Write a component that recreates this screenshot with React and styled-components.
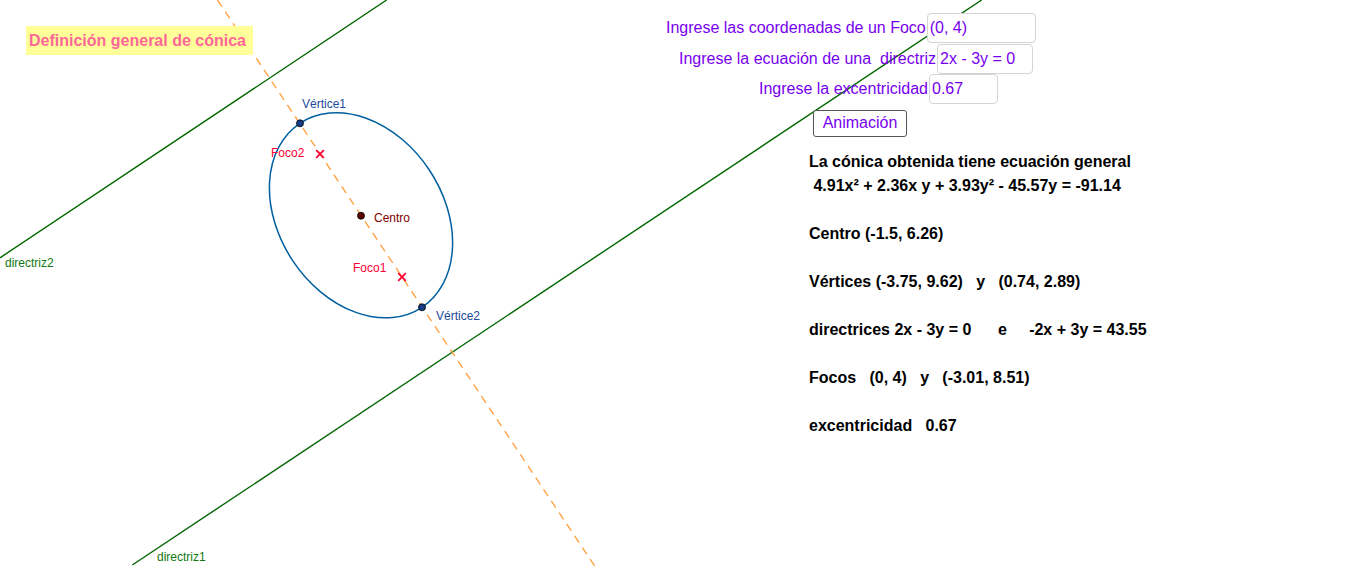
import React from 'react';
import styled, { createGlobalStyle } from 'styled-components';

const GlobalStyle = createGlobalStyle`
  html, body {
    margin: 0;
    padding: 0;
    background: #ffffff;
    overflow: hidden;
  }
  body {
    font-family: "Liberation Sans", Arial, sans-serif;
  }
`;

const cx = 361;
const cy = 215.3;
const angle = 56.45;

export default function App() {
  return (
    <>
      <GlobalStyle />
      <Applet>
        <Canvas width="1366" height="568" viewBox="0 0 1366 568">
          <line x1="0" y1="257.8" x2="386.7" y2="0" className="directriz" />
          <line x1="132.3" y1="565" x2="981.7" y2="0" className="directriz" />
          <line x1="217.5" y1="0" x2="596" y2="568" className="axis" />
          <ellipse
            cx={cx}
            cy={cy}
            rx="110.4"
            ry="82"
            transform={`rotate(${angle} ${cx} ${cy})`}
            className="conic"
          />
          <Cross x={320} y={154} />
          <Cross x={402} y={277} />
          <circle cx="300" cy="123.3" r="3.5" className="vertex" />
          <circle cx="422" cy="307.3" r="3.5" className="vertex" />
          <circle cx={cx} cy="215.7" r="3.5" className="center" />

          <text x="302" y="108" className="lbl-vertex">Vértice1</text>
          <text x="436" y="320" className="lbl-vertex">Vértice2</text>
          <text x="271" y="157" className="lbl-focus">Foco2</text>
          <text x="353" y="272" className="lbl-focus">Foco1</text>
          <text x="374" y="222" className="lbl-center">Centro</text>
          <text x="5" y="267" className="lbl-line">directriz2</text>
          <text x="157" y="561" className="lbl-line">directriz1</text>
        </Canvas>

        <Title>Definición general de cónica</Title>

        <InputPanel>
          <InputRow $indent={0}>
            <Label>Ingrese las coordenadas de un Foco</Label>
            <Field $width={109}>(0, 4)</Field>
          </InputRow>
          <InputRow $indent={13}>
            <Label>Ingrese la ecuación de una&nbsp; directriz</Label>
            <Field $width={96}>2x - 3y = 0</Field>
          </InputRow>
          <InputRow $indent={93}>
            <Label>Ingrese la excentricidad</Label>
            <Field $width={69}>0.67</Field>
          </InputRow>
          <ButtonRow $indent={147}>
            <Button>Animación</Button>
          </ButtonRow>
        </InputPanel>

        <Results>
          <ResultLine>La cónica obtenida tiene ecuación general</ResultLine>
          <ResultLine> 4.91x² + 2.36x y + 3.93y² - 45.57y = -91.14</ResultLine>
          <ResultLine $gap>Centro (-1.5, 6.26)</ResultLine>
          <ResultLine $gap>Vértices (-3.75, 9.62)   y   (0.74, 2.89)</ResultLine>
          <ResultLine $gap>directrices 2x - 3y = 0      e     -2x + 3y = 43.55</ResultLine>
          <ResultLine $gap>Focos   (0, 4)   y   (-3.01, 8.51)</ResultLine>
          <ResultLine $gap>excentricidad   0.67</ResultLine>
        </Results>
      </Applet>
    </>
  );
}

function Cross({ x, y }) {
  const s = 3.8;
  return (
    <g className="focus">
      <line x1={x - s} y1={y - s} x2={x + s} y2={y + s} />
      <line x1={x - s} y1={y + s} x2={x + s} y2={y - s} />
    </g>
  );
}

const Applet = styled.main`
  position: relative;
  width: 1366px;
  height: 568px;
  overflow: hidden;
  background: #ffffff;
`;

const Canvas = styled.svg`
  position: absolute;
  inset: 0;
  display: block;

  .directriz {
    stroke: #006600;
    stroke-width: 1.4;
  }
  .axis {
    stroke: #ff9933;
    stroke-width: 1.4;
    stroke-dasharray: 8 6;
    opacity: 0.9;
  }
  .conic {
    fill: none;
    stroke: #005fa0;
    stroke-width: 1.5;
  }
  .vertex {
    fill: #163c86;
    stroke: #000000;
    stroke-width: 0.8;
  }
  .center {
    fill: #5a0000;
    stroke: #000000;
    stroke-width: 0.8;
  }
  .focus line {
    stroke: #ff0033;
    stroke-width: 1.8;
  }
  text {
    font-family: "Liberation Sans", Arial, sans-serif;
    font-size: 12px;
  }
  .lbl-vertex {
    fill: #1c4a9a;
  }
  .lbl-focus {
    fill: #ff0033;
  }
  .lbl-center {
    fill: #800000;
  }
  .lbl-line {
    fill: #117711;
  }
`;

const Title = styled.div`
  position: absolute;
  left: 26px;
  top: 26px;
  width: 224px;
  height: 29px;
  padding-left: 3px;
  display: flex;
  align-items: center;
  background: #ffff99;
  color: #ff6699;
  font-weight: bold;
  font-size: 16px;
`;

const InputPanel = styled.div`
  position: absolute;
  left: 666px;
  top: 13px;
  display: flex;
  flex-direction: column;
  color: #7700ee;
  font-size: 16px;
`;

const InputRow = styled.div`
  display: flex;
  align-items: center;
  height: 30px;
  margin-left: ${p => p.$indent}px;
  margin-bottom: 0.5px;
`;

const Label = styled.span`
  white-space: pre;
  margin-right: 1px;
  line-height: 20px;
`;

const Field = styled.div`
  box-sizing: border-box;
  width: ${p => p.$width}px;
  height: 30px;
  padding: 0 2px;
  display: flex;
  align-items: center;
  border: 1.5px solid #d4d4d4;
  border-radius: 4px;
  background: #ffffff;
  white-space: pre;
`;

const ButtonRow = styled.div`
  display: flex;
  margin-left: ${p => p.$indent}px;
  margin-top: 5px;
`;

const Button = styled.div`
  box-sizing: border-box;
  width: 94px;
  height: 27px;
  display: flex;
  align-items: center;
  justify-content: center;
  border: 1px solid #555555;
  border-radius: 3px;
  background: #ffffff;
  color: #7700ee;
  font-size: 16px;
`;

const Results = styled.div`
  position: absolute;
  left: 809px;
  top: 150px;
  display: flex;
  flex-direction: column;
  color: #000000;
  font-weight: bold;
  font-size: 16px;
`;

const ResultLine = styled.div`
  white-space: pre;
  line-height: 24px;
  margin-top: ${p => (p.$gap ? '24px' : '0')};
`;
